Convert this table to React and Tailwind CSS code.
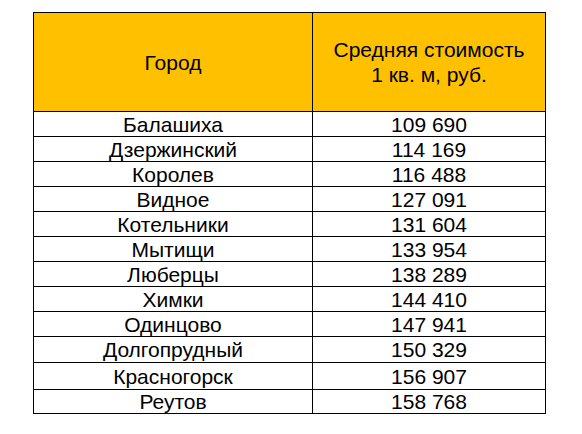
import React from "react";

const rows = [
  ["Балашиха", "109 690", "h-[25px]"],
  ["Дзержинский", "114 169", "h-[25px]"],
  ["Королев", "116 488", "h-[25px]"],
  ["Видное", "127 091", "h-[25px]"],
  ["Котельники", "131 604", "h-[25px]"],
  ["Мытищи", "133 954", "h-[25px]"],
  ["Люберцы", "138 289", "h-[25px]"],
  ["Химки", "144 410", "h-[25px]"],
  ["Одинцово", "147 941", "h-[25px]"],
  ["Долгопрудный", "150 329", "h-[26px]"],
  ["Красногорск", "156 907", "h-[27px]"],
  ["Реутов", "158 768", "h-[24px]"],
];

export default function App() {
  return (
    <div className="w-[582px] h-[434px] bg-white pt-[12px] pl-[33px] font-['Liberation_Sans',Arial,sans-serif] text-black">
      <div className="w-[513px] border border-black text-[21px] leading-none">
        <div className="flex h-[98px] bg-[#FFC000]">
          <div className="w-[279px] border-r border-black flex items-center justify-center">
            Город
          </div>
          <div className="flex-1 flex flex-col items-center justify-center leading-[25px]">
            <span>Средняя стоимость</span>
            <span>1 кв. м, руб.</span>
          </div>
        </div>
        {rows.map(([city, price, h]) => (
          <div key={city} className={`flex border-t border-black ${h}`}>
            <div className="w-[279px] border-r border-black flex items-center justify-center">
              {city}
            </div>
            <div className="flex-1 flex items-center justify-center">{price}</div>
          </div>
        ))}
      </div>
    </div>
  );
}
